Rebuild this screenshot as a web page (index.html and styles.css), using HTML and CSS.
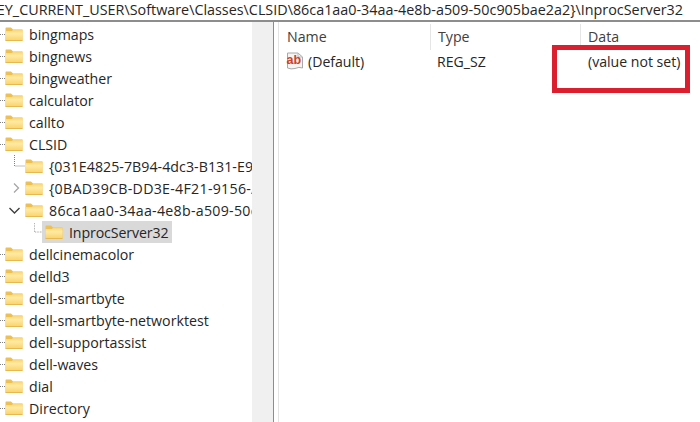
FILE: index.html
```html
<!DOCTYPE html>
<html lang="en">
<head>
<meta charset="utf-8">
<title>Registry Editor</title>
<link rel="stylesheet" href="styles.css">
</head>
<body>
<svg class="defs" width="0" height="0" aria-hidden="true">
  <defs>
    <linearGradient id="fg" x1="0" y1="0" x2="0" y2="1">
      <stop offset="0" stop-color="#fbd56c"/>
      <stop offset=".35" stop-color="#ffeaa6"/>
      <stop offset="1" stop-color="#fbd368"/>
    </linearGradient>
    <symbol id="folder" viewBox="0 0 18 14">
      <path d="M0.5 1.2 Q0.5 0.5 1.2 0.5 H6 L8 2.5 H17.5 V13.5 H0.5 Z" fill="#eebf52"/>
      <path d="M0.5 4 H6.5 L8.5 2.8 H17.5 V13.5 H0.5 Z" fill="url(#fg)"/>
      <path d="M0.5 13.5 H17.5" stroke="#e6b850" stroke-width="1"/>
    </symbol>
  </defs>
</svg>
<div class="address"><span>HKEY_CURRENT_USER\Software\Classes\CLSID\86ca1aa0-34aa-4e8b-a509-50c905bae2a2}\InprocServer32</span></div>
<main class="panes">
  <nav class="tree">
    <div class="row"><i class="stub"></i><svg class="fld"><use href="#folder"/></svg><span>bingmaps</span></div>
    <div class="row"><i class="stub"></i><svg class="fld"><use href="#folder"/></svg><span>bingnews</span></div>
    <div class="row"><i class="stub"></i><svg class="fld"><use href="#folder"/></svg><span>bingweather</span></div>
    <div class="row"><i class="stub"></i><svg class="fld"><use href="#folder"/></svg><span>calculator</span></div>
    <div class="row"><i class="stub"></i><svg class="fld"><use href="#folder"/></svg><span>callto</span></div>
    <div class="row"><i class="stub"></i><svg class="fld"><use href="#folder"/></svg><span>CLSID</span></div>
    <div class="row l1 tight"><svg class="twist" viewBox="0 0 20 22"><path d="M9.5 0 V11 H20" fill="none" stroke="#808080" stroke-dasharray="1 1"/></svg><svg class="fld"><use href="#folder"/></svg><span>{031E4825-7B94-4dc3-B131-E95A2D14F0C7}</span></div>
    <div class="row l1"><svg class="twist" viewBox="0 0 20 22"><path d="M9 6.5 L13.5 11 L9 15.5" fill="none" stroke="#a6a6a6" stroke-width="1.3"/></svg><svg class="fld"><use href="#folder"/></svg><span>{0BAD39CB-DD3E-4F21-9156-A7C3E0B1D2F4}</span></div>
    <div class="row l1"><svg class="twist" viewBox="0 0 20 22"><path d="M4.5 9 L9.5 14 L14.5 9" fill="none" stroke="#404040" stroke-width="1.4"/></svg><svg class="fld"><use href="#folder"/></svg><span>86ca1aa0-34aa-4e8b-a509-50c905bae2a2}</span></div>
    <div class="row l2"><svg class="conn" viewBox="0 0 10 22"><path d="M0.5 0 V11 H10" fill="none" stroke="#808080" stroke-dasharray="1 1"/></svg><div class="sel"><svg class="fld"><use href="#folder"/></svg><span>InprocServer32</span></div></div>
    <div class="row"><i class="stub"></i><svg class="fld"><use href="#folder"/></svg><span>dellcinemacolor</span></div>
    <div class="row"><i class="stub"></i><svg class="fld"><use href="#folder"/></svg><span>delld3</span></div>
    <div class="row"><i class="stub"></i><svg class="fld"><use href="#folder"/></svg><span>dell-smartbyte</span></div>
    <div class="row"><i class="stub"></i><svg class="fld"><use href="#folder"/></svg><span>dell-smartbyte-networktest</span></div>
    <div class="row"><i class="stub"></i><svg class="fld"><use href="#folder"/></svg><span>dell-supportassist</span></div>
    <div class="row"><i class="stub"></i><svg class="fld"><use href="#folder"/></svg><span>dell-waves</span></div>
    <div class="row"><i class="stub"></i><svg class="fld"><use href="#folder"/></svg><span>dial</span></div>
    <div class="row"><i class="stub"></i><svg class="fld"><use href="#folder"/></svg><span>Directory</span></div>
  </nav>
  <div class="scrollbar"></div>
  <div class="splitter"></div>
  <section class="list">
    <div class="head">
      <div class="col c-name">Name</div>
      <div class="col c-type">Type</div>
      <div class="col c-data">Data</div>
    </div>
    <div class="item">
      <div class="cell c-name name-cell">
        <svg class="ab" viewBox="0 0 18 18"><path d="M1.5 1 H12 L16.5 5 V16 Q13 14.5 9 16.5 Q5 17.5 1.5 16 Z" fill="#f6f3f0" stroke="#a9a9a9"/><path d="M12 1 V5 H16.5" fill="none" stroke="#bdbdbd"/><text class="ab-t" x="0.6" y="12">ab</text></svg>
        <span>(Default)</span>
      </div>
      <div class="cell c-type">REG_SZ</div>
      <div class="cell c-data">(value not set)</div>
    </div>
    <div class="mark"></div>
  </section>
</main>
</body>
</html>
```
FILE: styles.css
```css
* { box-sizing: border-box; }
html, body { margin: 0; height: 100%; }
body {
  width: 700px;
  height: 422px;
  overflow: hidden;
  background: #fff;
  color: #262626;
  font-family: "Open Sans", "Noto Sans", sans-serif;
  font-size: 14.2px;
  display: flex;
  flex-direction: column;
}
.defs { position: absolute; }
.address {
  height: 22px;
  flex: none;
  display: flex;
  justify-content: flex-end;
  padding: 0 17px 2px 0;
  border-bottom: 2px solid #8d8d8d;
  overflow: hidden;
  white-space: nowrap;
  line-height: 19px;
  font-size: 14.35px;
}
.address span { flex: none; }
.panes { flex: 1; display: flex; min-height: 0; }
.tree { width: 252px; flex: none; overflow: hidden; padding-top: 1px; }
.row { height: 22px; display: flex; align-items: center; white-space: nowrap; }
.row span { line-height: 22px; padding-top: 2px; }
.stub { width: 5px; height: 0; flex: none; border-top: 1px dotted #808080; }
.fld { width: 18px; height: 14px; flex: none; margin-right: 6px; }
.l1 { padding-left: 5px; }
.l1 span { letter-spacing: .28px; }
.l1.tight span { letter-spacing: .04px; }
.twist { width: 20px; height: 22px; flex: none; }
.l2 { padding-left: 34px; }
.conn { width: 8px; height: 22px; flex: none; }
.sel { display: flex; align-items: center; height: 22px; width: 130px; padding-left: 3px; background: #d9d9d9; }
.sel span { letter-spacing: -.12px; }
.scrollbar { width: 21px; flex: none; background: #f0f0f0; }
.splitter { width: 6px; flex: none; border-left: 1px solid #8d8d8d; border-right: 1px solid #e3e3e3; }
.list { flex: 1; position: relative; padding-left: 1px; }
.head { display: flex; height: 26px; align-items: center; padding-top: 4px; }
.col { height: 26px; line-height: 26px; color: #404040; border-right: 1px solid #e5e5e5; padding-left: 7px; }
.c-name { width: 151px; }
.c-type { width: 150px; }
.c-data { width: 120px; padding-left: 7px; }
.col.c-data { border-right: 0; }
.item { display: flex; height: 22px; align-items: center; padding-top: 5px; }
.cell { padding-left: 7px; white-space: nowrap; font-size: 14.1px; }
.c-type.cell { padding-left: 6px; }
.name-cell { display: flex; align-items: center; padding-left: 6px; gap: 4px; }
.ab { width: 18px; height: 18px; flex: none; margin-top: -1px; }
.ab-t { font-family: "Liberation Sans", sans-serif; font-size: 12.5px; font-weight: 700; fill: #c8442a; }
.mark {
  position: absolute;
  left: 273px;
  top: 23px;
  width: 138px;
  height: 48px;
  border: 5px solid #dc1f2e;
}
```
